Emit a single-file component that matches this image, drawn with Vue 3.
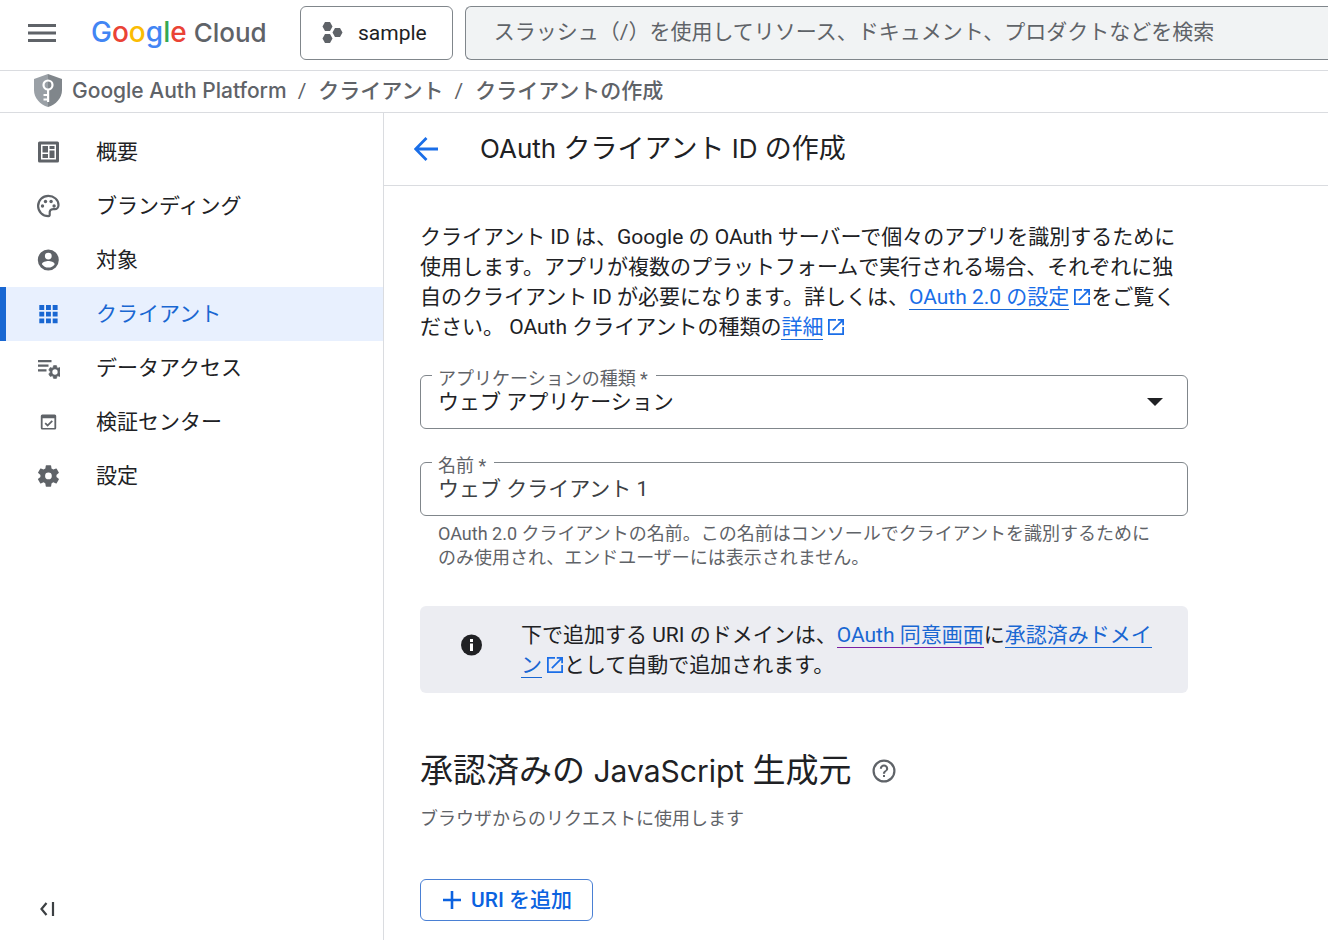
<script setup>
import { ref } from 'vue'

const appType = ref('web')
const clientName = ref('ウェブ クライアント 1')

const navItems = [
  { id: 'overview', label: '概要' },
  { id: 'branding', label: 'ブランディング' },
  { id: 'audience', label: '対象' },
  { id: 'clients', label: 'クライアント', active: true },
  { id: 'data', label: 'データアクセス' },
  { id: 'verify', label: '検証センター' },
  { id: 'settings', label: '設定' }
]

const gear =
  'M19.14 12.94c.04-.3.06-.61.06-.94s-.02-.64-.07-.94l2.03-1.58a.49.49 0 0 0 .12-.61l-1.92-3.32a.49.49 0 0 0-.59-.22l-2.39.96c-.5-.38-1.03-.7-1.62-.94l-.36-2.54a.48.48 0 0 0-.48-.41h-3.84c-.24 0-.43.17-.47.41l-.36 2.54c-.59.24-1.13.57-1.62.94l-2.39-.96a.48.48 0 0 0-.59.22L2.74 8.87c-.12.21-.08.47.12.61l2.03 1.58c-.05.3-.09.63-.09.94s.02.64.07.94l-2.03 1.58a.49.49 0 0 0-.12.61l1.92 3.32c.12.22.37.29.59.22l2.39-.96c.5.38 1.03.7 1.62.94l.36 2.54c.05.24.24.41.48.41h3.84c.24 0 .44-.17.47-.41l.36-2.54c.59-.24 1.13-.56 1.62-.94l2.39.96c.22.08.47 0 .59-.22l1.92-3.32a.49.49 0 0 0-.12-.61zM12 15a3 3 0 1 1 0-6 3 3 0 0 1 0 6z'

const external =
  'M19 19H5V5h7V3H3v18h18v-9h-2zM14 3v2h3.590l-9.830 9.830 1.410 1.410L19 6.410V10h2V3z'
</script>

<template>
  <div class="page">
    <header class="topbar">
      <button class="icon-button" type="button" aria-label="メニュー">
        <svg width="28" height="20" viewBox="0 0 28 20"><path d="M0 1h28v3H0zM0 8.500h28v3H0zM0 16h28v3H0z" fill="#5f6368" /></svg>
      </button>
      <a class="logo" href="#" aria-label="Google Cloud">
        <span class="google"><span class="blue">G</span><span class="red">o</span><span class="yellow">o</span><span class="blue">g</span><span class="green">l</span><span class="red">e</span></span>
        <span class="cloud">Cloud</span>
      </a>
      <button class="project" type="button">
        <svg width="22" height="22" viewBox="0 0 22 22" fill="#5f6368">
          <path d="M3 0h5l2.500 4.500L8 9H3L.5 4.500zM13 6h5l2.500 4.500L18 15h-5l-2.500-4.500zM3 12h5l2.500 4.500L8 21H3L.5 16.500z" />
        </svg>
        sample
      </button>
      <input class="search" type="search" aria-label="検索" placeholder="スラッシュ（/）を使用してリソース、ドキュメント、プロダクトなどを検索" />
    </header>

    <nav class="crumbs" aria-label="パンくずリスト">
      <svg class="shield" width="28" height="33" viewBox="0 0 28 33">
        <path d="M14 0 0 5v11c0 8 6 14.500 14 17z" fill="#9aa0a6" />
        <path d="M14 0l14 5v11c0 8-6 14.500-14 17z" fill="#80868b" />
        <circle cx="14" cy="11" r="4.500" fill="none" stroke="#fff" stroke-width="2.200" />
        <path d="M13 15h2.200v13H13zM9.500 20H13v2H9.500zM9.500 24.500H13v2H9.500z" fill="#fff" />
      </svg>
      <a href="#">Google Auth Platform</a>
      <span class="slash">/</span>
      <a href="#">クライアント</a>
      <span class="slash">/</span>
      <span>クライアントの作成</span>
    </nav>

    <div class="body">
      <aside class="sidebar">
        <nav>
          <a v-for="item in navItems" :key="item.id" href="#" class="nav-item" :class="{ active: item.active }">
            <svg class="nav-icon" viewBox="0 0 24 24" fill="currentColor">
              <template v-if="item.id === 'overview'">
                <path fill-rule="evenodd" d="M3.500 1.500h18A1.500 1.500 0 0 1 23 3v18a1.500 1.500 0 0 1-1.500 1.500h-18A1.500 1.500 0 0 1 2 21V3a1.500 1.500 0 0 1 1.500-1.500zM5 4.500v15h15v-15z" />
                <path d="M6.500 6H12v6.500H6.500zM13.500 6h5v3h-5zM13.500 10.500h5V18h-5zM6.500 14H12v4H6.500z" />
              </template>
              <template v-else-if="item.id === 'branding'">
                <path d="M12.300 1.800a10.200 10.200 0 1 0 0 20.400c1.400 0 1.500-1 1.400-2-.3-3.700.6-5 3.600-5h1.500c2 0 3.700-2 3.700-4.200 0-5.200-4.600-9.200-10.200-9.200z" fill="none" stroke="currentColor" stroke-width="2.200" />
                <circle cx="6.500" cy="12" r="1.700" /><circle cx="9.500" cy="7.500" r="1.700" /><circle cx="15.100" cy="7.500" r="1.700" /><circle cx="18.100" cy="12" r="1.700" />
              </template>
              <path v-else-if="item.id === 'audience'" fill-rule="evenodd" d="M12.300 1.500a10.500 10.500 0 1 0 0 21 10.500 10.500 0 0 0 0-21zm0 3.200a3.400 3.400 0 1 1 0 6.800 3.400 3.400 0 0 1 0-6.800zm0 14.900c-2.700 0-5-1.400-6.400-3.400.1-2.100 4.300-3.200 6.400-3.200s6.300 1.100 6.400 3.200a7.700 7.700 0 0 1-6.400 3.400z" />
              <path v-else-if="item.id === 'clients'" d="M3.300 3h4.900v4.900H3.300zM10 3h4.900v4.900H10zM16.700 3h4.900v4.900h-4.900zM3.300 9.700h4.900v4.900H3.300zM10 9.700h4.900v4.900H10zM16.700 9.700h4.900v4.900h-4.900zM3.300 16.400h4.900v4.900H3.300zM10 16.400h4.900v4.900H10zM16.700 16.400h4.900v4.900h-4.900z" />
              <template v-else-if="item.id === 'data'">
                <path d="M2 4h13.500v2.200H2zM2 8.600h10.500v2.200H2zM2 13.200h8.500v2.200H2z" />
                <svg x="11" y="8" width="16" height="16" viewBox="0 0 24 24" overflow="visible">
                  <path :d="gear" stroke="currentColor" stroke-width="1" />
                  <circle cx="12" cy="12" r="4" fill="#fff" />
                </svg>
              </template>
              <path v-else-if="item.id === 'verify'" fill-rule="evenodd" d="M6.300 4.500h12.400A1.500 1.500 0 0 1 20.200 6v12a1.500 1.500 0 0 1-1.500 1.500H6.300A1.500 1.500 0 0 1 4.800 18V6a1.500 1.500 0 0 1 1.500-1.500zm.3 3.700v9.700h11.800V8.200zm5 8.500-3-3 1.200-1.200 1.800 1.800 4.100-4.100 1.200 1.200z" />
              <path v-else :d="gear" transform="translate(-1 -1.500) scale(1.120)" />
            </svg>
            <span>{{ item.label }}</span>
          </a>
        </nav>
        <button class="collapse" type="button" aria-label="ナビゲーションを閉じる">
          <svg width="16" height="14" viewBox="0 0 16 14"><path d="M7.500 1 2.500 7l5 6M14 0v14" fill="none" stroke="#3c4043" stroke-width="2.200" /></svg>
        </button>
      </aside>

      <main class="main">
        <div class="title-bar">
          <button class="icon-button" type="button" aria-label="戻る">
            <svg width="24" height="24" viewBox="0 0 24 24"><path d="M24 12H2M12.500 1 1.600 12l10.900 11" fill="none" stroke="#1a6ee8" stroke-width="2.800" /></svg>
          </button>
          <h1><span class="latin">OAuth </span>クライアント<span class="latin"> ID </span>の作成</h1>
        </div>

        <form class="content" @submit.prevent>
          <p class="intro">クライアント ID は、Google の OAuth サーバーで個々のアプリを識別するために使用します。アプリが複数のプラットフォームで実行される場合、それぞれに独自のクライアント ID が必要になります。詳しくは、<a href="#">OAuth 2.0 の設定</a><svg class="external" viewBox="3 3 18 18"><path :d="external" /></svg>をご覧ください。 OAuth クライアントの種類の<a href="#">詳細</a><svg class="external" viewBox="3 3 18 18"><path :d="external" /></svg></p>

          <div class="field">
            <label for="app-type">アプリケーションの種類 *</label>
            <select id="app-type" v-model="appType">
              <option value="web">ウェブ アプリケーション</option>
            </select>
            <svg class="caret" width="16" height="8" viewBox="0 0 16 8"><path d="M0 0h16L8 8z" fill="#202124" /></svg>
          </div>

          <div class="field">
            <label for="client-name">名前 *</label>
            <input id="client-name" v-model="clientName" type="text" aria-describedby="name-hint" />
          </div>
          <p id="name-hint" class="hint">OAuth 2.0 クライアントの名前。この名前はコンソールでクライアントを識別するためにのみ使用され、エンドユーザーには表示されません。</p>

          <div class="notice">
            <svg class="info" width="22" height="22" viewBox="0 0 22 22"><circle cx="11.500" cy="11" r="10.500" fill="#202124" /><path d="M10 5h3v3h-3zM10 9.500h3V17h-3z" fill="#fff" /></svg>
            <p>下で追加する URI のドメインは、<a href="#" class="visited">OAuth 同意画面</a>に<a href="#">承認済みドメイン</a><svg class="external" viewBox="3 3 18 18"><path :d="external" /></svg>として自動で追加されます。</p>
          </div>

          <div class="section-head">
            <h2>承認済みの<span class="latin"> JavaScript </span>生成元</h2>
            <button class="icon-button" type="button" aria-label="ヘルプ">
              <svg width="24" height="24" viewBox="0 0 24 24" fill="#5f6368"><path d="M11 18h2v-2h-2zm1-17.500a11.500 11.500 0 1 0 0 23 11.500 11.500 0 0 0 0-23zm0 20.800a9.300 9.300 0 1 1 0-18.600 9.300 9.300 0 0 1 0 18.600zM12 5.500a4.200 4.200 0 0 0-4.200 4.200h2.100a2.100 2.100 0 1 1 4.200 0c0 2.100-3.200 1.900-3.200 5h2.200c0-2.300 3.100-2.600 3.100-5A4.200 4.200 0 0 0 12 5.500z" /></svg>
            </button>
          </div>
          <p class="sub">ブラウザからのリクエストに使用します</p>

          <button class="add" type="button">
            <svg width="18" height="18" viewBox="0 0 18 18"><path d="M9 0v18M0 9h18" stroke="#0b62e0" stroke-width="2.600" /></svg>
            URI を追加
          </button>
        </form>
      </main>
    </div>
  </div>
</template>

<style>
body {
  margin: 0;
  background: #fff;
}
</style>

<style scoped>
* {
  box-sizing: border-box;
}
.page {
  display: flex;
  flex-direction: column;
  min-height: 100vh;
  font: 400 21px/30px Roboto, "Noto Sans CJK JP", sans-serif;
  color: #202124;
}
button,
input,
select {
  font: inherit;
  color: inherit;
}
svg {
  flex: none;
}
h1,
h2,
p {
  margin: 0;
  font-weight: 400;
}
a {
  text-decoration: none;
}
.icon-button,
.collapse {
  display: flex;
  padding: 0;
  border: 0;
  background: none;
}
.topbar {
  display: flex;
  align-items: center;
  height: 71px;
  padding: 0 0 4px 28px;
  border-bottom: 1px solid #dadce0;
}
.logo {
  display: flex;
  align-items: baseline;
  gap: 7px;
  width: 244px;
  padding: 0 0 2px 35px;
  font: 500 28px/32px Inter, sans-serif;
}
.cloud {
  font-size: 26px;
  color: #5f6368;
}
.blue { color: #4285f4; }
.red { color: #ea4335; }
.yellow { color: #fbbc04; }
.green { color: #34a853; }
.project {
  display: flex;
  align-items: center;
  gap: 14px;
  height: 54px;
  padding: 0 25px 0 21px;
  border: 1px solid #80868b;
  border-radius: 6px;
  background: #fff;
}
.search {
  flex: 1;
  min-width: 0;
  height: 54px;
  margin-left: 12px;
  padding: 0 28px 2px;
  border: 1px solid #80868b;
  border-right: 0;
  border-radius: 6px 0 0 6px;
  background: #f1f3f4;
  appearance: none;
}
.search::placeholder {
  color: #5f6368;
  opacity: 1;
}
.crumbs {
  display: flex;
  align-items: center;
  height: 42px;
  padding: 0 34px 2px;
  border-bottom: 1px solid #dadce0;
  font-family: Inter, "Noto Sans CJK JP", sans-serif;
  font-weight: 500;
  color: #5f6368;
}
.crumbs a {
  color: inherit;
}
.shield {
  margin-right: 10px;
}
.slash {
  margin: 0 12px 0 11px;
  font-family: Roboto, sans-serif;
  font-weight: 400;
}
.body {
  display: flex;
  flex: 1;
}
.sidebar {
  display: flex;
  flex: 0 0 384px;
  flex-direction: column;
  justify-content: space-between;
  padding: 12px 0 24px;
  border-right: 1px solid #dadce0;
}
.nav-item {
  display: flex;
  align-items: center;
  gap: 36px;
  height: 54px;
  padding: 0 0 1px 30px;
  border-left: 6px solid transparent;
  color: #202124;
}
.nav-icon {
  width: 24px;
  height: 24px;
  color: #5f6368;
}
.active {
  border-color: #1967d2;
  background: #e8f0fe;
  color: #1967d2;
}
.active .nav-icon {
  color: #1967d2;
}
.collapse {
  margin-left: 39px;
}
.main {
  flex: 1;
  min-width: 0;
}
.title-bar {
  display: flex;
  align-items: center;
  gap: 42px;
  height: 73px;
  padding: 0 30px;
  border-bottom: 1px solid #dadce0;
}
h1 {
  font: 400 27px/36px Inter, "Noto Sans CJK JP", sans-serif;
}
h1 .latin {
  font-size: 26px;
}
.content {
  max-width: 840px;
  padding: 36px 36px 19px;
}
.intro a,
.notice a {
  border-bottom: 1px solid #1967d2;
  color: #1a6ee8;
}
.notice a {
  color: #1967d2;
}
.notice .visited {
  border-color: #7b1fa2;
}
.external {
  width: 16px;
  height: 16px;
  margin: 0 1px 0 5px;
  vertical-align: -1px;
  fill: #1a6ee8;
}
.field {
  position: relative;
  margin-top: 33px;
}
.field label {
  position: absolute;
  top: -8px;
  left: 12px;
  padding: 0 8px 0 6px;
  background: #fff;
  font-size: 18px;
  line-height: 24px;
  color: #5f6368;
}
.field input,
.field select {
  display: block;
  width: 100%;
  height: 54px;
  padding: 0 17px;
  border: 1px solid #80868b;
  border-radius: 6px;
  background: #fff;
  appearance: none;
}
.field input {
  padding-bottom: 4px;
  color: #3c4043;
}
.caret {
  position: absolute;
  top: 23px;
  right: 25px;
  pointer-events: none;
}
.hint,
.sub {
  font-size: 18px;
  line-height: 24px;
  color: #5f6368;
}
.hint {
  padding: 6px 24px 0 18px;
}
.notice {
  display: flex;
  align-items: flex-start;
  gap: 39px;
  margin-top: 36px;
  padding: 14px 24px 13px 40px;
  border-radius: 6px;
  background: #ecedf2;
}
.info {
  margin-top: 14px;
}
.section-head {
  display: flex;
  align-items: center;
  gap: 20px;
  margin-top: 53px;
}
h2 {
  font: 400 33px/48px Inter, "Noto Sans CJK JP", sans-serif;
}
h2 .latin {
  font-size: 30px;
}
.sub {
  margin-top: 12px;
}
.add {
  display: flex;
  align-items: center;
  gap: 10px;
  height: 42px;
  margin-top: 48px;
  padding: 0 20px 0 22px;
  border: 1px solid #4a80d4;
  border-radius: 6px;
  background: #fff;
  font-weight: 500;
  color: #0b62e0;
}
</style>
